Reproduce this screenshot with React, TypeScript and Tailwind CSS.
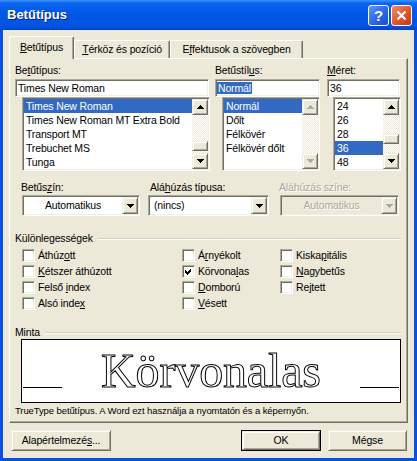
import React from 'react';

const FONT = "font-['Liberation_Sans',Arial,sans-serif]";

// classic 3D borders (XP beige palette)
const sunken =
  'border border-t-[#aca899] border-l-[#aca899] border-r-white border-b-white shadow-[inset_1px_1px_0_#716f64,inset_-1px_-1px_0_#f1efe2] p-px';
const raised =
  'border border-t-[#f1efe2] border-l-[#f1efe2] border-r-[#716f64] border-b-[#716f64] shadow-[inset_1px_1px_0_#fff,inset_-1px_-1px_0_#aca899] bg-[#ece9d8]';
const track =
  'bg-[image:repeating-conic-gradient(#ffffff_0_25%,#ece9d8_0_50%)] bg-[length:2px_2px]';

// "Be&tűtípus" -> underline the char after &
function Acc({ text }: { text: string }) {
  const i = text.indexOf('&');
  if (i < 0) return <>{text}</>;
  return (
    <>
      {text.slice(0, i)}
      <span className="underline underline-offset-[1px]">{text[i + 1]}</span>
      {text.slice(i + 2)}
    </>
  );
}

function Arrow({ dir, disabled }: { dir: 'up' | 'down'; disabled?: boolean }) {
  return (
    <svg width="7" height="4" viewBox="0 0 7 4" shapeRendering="crispEdges">
      <path d={dir === 'up' ? 'M3.5 0 L7 4 L0 4 Z' : 'M0 0 L7 0 L3.5 4 Z'} fill={disabled ? '#aca899' : '#000'} />
    </svg>
  );
}

function ScrollBtn({ dir, disabled }: { dir: 'up' | 'down'; disabled?: boolean }) {
  return (
    <div className={`${raised} w-[16px] h-[16px] shrink-0 flex items-center justify-center`}>
      <Arrow dir={dir} disabled={disabled} />
    </div>
  );
}

function ScrollBar({ before, disabled }: { before?: number; disabled?: boolean }) {
  return (
    <div className={`w-[16px] h-full flex flex-col ${track}`}>
      <ScrollBtn dir="up" disabled={disabled} />
      <div className="flex-1 flex flex-col">
        {before !== undefined && (
          <>
            <div style={{ height: before }} />
            <div className={`${raised} h-[10px]`} />
          </>
        )}
      </div>
      <ScrollBtn dir="down" disabled={disabled} />
    </div>
  );
}

function ListBox({
  items,
  selected,
  className,
  thumb,
  disabled,
}: {
  items: string[];
  selected: number;
  className: string;
  thumb?: number;
  disabled?: boolean;
}) {
  return (
    <div className={`${sunken} ${className} h-[74px] bg-white flex`}>
      <div className="flex-1 overflow-hidden">
        {items.map((it, i) => (
          <div
            key={it}
            className={`h-[14px] leading-[14px] pl-[2px] whitespace-nowrap ${i === selected ? 'bg-[#316ac5] text-white' : ''}`}
          >
            {it}
          </div>
        ))}
      </div>
      <ScrollBar before={thumb} disabled={disabled} />
    </div>
  );
}

function Combo({ text, center, disabled, className }: { text: string; center?: boolean; disabled?: boolean; className: string }) {
  return (
    <div className={`${sunken} ${className} h-[21px] flex ${disabled ? 'bg-[#ece9d8]' : 'bg-white'}`}>
      <div
        className={`flex-1 leading-[17px] ${center ? 'text-center' : 'pl-[4px]'} ${disabled ? 'text-[#aca899] [text-shadow:1px_1px_0_#fff]' : ''}`}
      >
        {text}
      </div>
      <div className={`${raised} w-[16px] h-[17px] flex items-center justify-center`}>
        <Arrow dir="down" disabled={disabled} />
      </div>
    </div>
  );
}

function Check({ label, checked }: { label: string; checked?: boolean }) {
  return (
    <div className="h-[16px] flex items-center">
      <div className="w-[13px] h-[13px] bg-white border border-t-[#aca899] border-l-[#aca899] border-r-white border-b-white shadow-[inset_1px_1px_0_#716f64,inset_-1px_-1px_0_#f1efe2] flex items-center justify-center">
        {checked && (
          <svg width="7" height="7" viewBox="0 0 7 7" shapeRendering="crispEdges">
            <path d="M0 2 L2 4 L6 0 L6 3 L2 7 L0 5 Z" fill="#000" />
          </svg>
        )}
      </div>
      <span className="ml-[3px] leading-[13px]">
        <Acc text={label} />
      </span>
    </div>
  );
}

function GroupTitle({ text }: { text: string }) {
  return (
    <div className="h-[13px] flex items-center">
      <span className="leading-[13px]">{text}</span>
      <div className="flex-1 ml-[5px] h-[2px] border-t border-t-[#d0d0bf] border-b border-b-white" />
    </div>
  );
}

function TitleBar() {
  return (
    <div className="h-[30px] shrink-0 flex items-center pl-[7px] pr-[5px] bg-[linear-gradient(to_bottom,#3d95ff_0%,#0a66f0_10%,#0058e6_45%,#0054e3_85%,#0043c8_100%)]">
      <span className="flex-1 text-[13px] tracking-normal font-bold text-white [text-shadow:1px_1px_0_#0a1e8a]">Betűtípus</span>
      <div className="w-[21px] h-[21px] rounded-[3px] border border-white bg-[linear-gradient(135deg,#5b95ff_0%,#2663e8_60%,#1b4fcf_100%)] flex items-center justify-center text-white font-bold text-[15px] leading-none">
        ?
      </div>
      <div className="w-[21px] h-[21px] ml-[2px] rounded-[3px] border border-white bg-[linear-gradient(135deg,#f08c6c_0%,#e0542c_55%,#c53a14_100%)] flex items-center justify-center">
        <svg width="11" height="11" viewBox="0 0 11 11">
          <path d="M1.5 1.5 L9.5 9.5 M9.5 1.5 L1.5 9.5" stroke="#fff" strokeWidth="2.2" />
        </svg>
      </div>
    </div>
  );
}

function Tabs() {
  const tab = 'border-t border-l border-t-white border-l-white border-r border-r-[#716f64] shadow-[inset_-1px_0_0_#aca899] rounded-t-[2px] bg-[#ece9d8] flex justify-center';
  return (
    <div className="h-[23px] flex items-end relative z-10 -mb-px">
      <div className={`${tab} w-[65px] h-[23px] pt-[4px] leading-[13px]`}>
        <Acc text="&Betűtípus" />
      </div>
      <div className={`${tab} w-[96px] h-[18px] mb-px pt-[2px] leading-[13px]`}>
        <Acc text="&Térköz és pozíció" />
      </div>
      <div className={`${tab} w-[133px] h-[18px] mb-px pt-[2px] leading-[13px]`}>
        <Acc text="E&ffektusok a szövegben" />
      </div>
    </div>
  );
}

function Panel() {
  return (
    <div className="h-[365px] shrink-0 border border-t-white border-l-white border-r-[#716f64] border-b-[#716f64] shadow-[inset_-1px_-1px_0_#aca899] pl-[5px] pr-[6px] flex flex-col">
      {/* font / style / size */}
      <div className="mt-[5px] flex">
        <div className="w-[195px] flex flex-col">
          <div className="h-[13px] leading-[13px]"><Acc text="Be&tűtípus:" /></div>
          <div className={`${sunken} mt-[2px] w-[194px] h-[18px] bg-white leading-[14px] pl-[2px]`}>Times New Roman</div>
          <ListBox
            className="ml-[7px] w-[188px]"
            items={['Times New Roman', 'Times New Roman MT Extra Bold', 'Transport MT', 'Trebuchet MS', 'Tunga']}
            selected={0}
            thumb={26}
          />
        </div>
        <div className="ml-[5px] w-[105px] flex flex-col">
          <div className="h-[13px] leading-[13px]"><Acc text="Betűstíl&us:" /></div>
          <div className={`${sunken} mt-[2px] h-[18px] bg-white leading-[14px] pl-[1px]`}>
            <span className="bg-[#316ac5] text-white px-px">Normál</span>
          </div>
          <ListBox
            className="ml-[7px] w-[98px]"
            items={['Normál', 'Dőlt', 'Félkövér', 'Félkövér dőlt']}
            selected={0}
            disabled
          />
        </div>
        <div className="ml-[7px] w-[74px] flex flex-col">
          <div className="h-[13px] leading-[13px]"><Acc text="&Méret:" /></div>
          <div className={`${sunken} mt-[2px] w-[73px] h-[18px] bg-white leading-[14px] pl-[2px]`}>36</div>
          <ListBox className="ml-[6px] w-[68px]" items={['24', '26', '28', '36', '48']} selected={3} thumb={19} />
        </div>
      </div>

      {/* colour / underline */}
      <div className="mt-[10px] ml-[6px] flex">
        <div className="w-[119px] flex flex-col">
          <div className="h-[13px] leading-[13px]"><Acc text="Betűs&zín:" /></div>
          <Combo className="mt-px ml-px w-[118px]" text="Automatikus" center />
        </div>
        <div className="ml-[8px] w-[121px] flex flex-col">
          <div className="h-[13px] leading-[13px] pl-[2px]"><Acc text="Alá&húzás típusa:" /></div>
          <Combo className="mt-px w-[121px]" text="(nincs)" />
        </div>
        <div className="ml-[10px] w-[120px] flex flex-col">
          <div className="h-[13px] leading-[13px] text-[#aca899] [text-shadow:1px_1px_0_#fff]">Aláhúzás színe:</div>
          <Combo className="mt-px ml-px w-[119px]" text="Automatikus" center disabled />
        </div>
      </div>

      {/* effects */}
      <div className="mt-[16px]">
        <GroupTitle text="Különlegességek" />
      </div>
      <div className="mt-[2px] ml-[7px] grid grid-cols-[160px_98px_1fr]">
        <div className="flex flex-col">
          <Check label="Áthúz&ott" />
          <Check label="&Kétszer áthúzott" />
          <Check label="Felső &index" />
          <Check label="Alsó inde&x" />
        </div>
        <div className="flex flex-col">
          <Check label="Á&rnyékolt" />
          <Check label="Körvona&las" checked />
          <Check label="&Domború" />
          <Check label="&Vésett" />
        </div>
        <div className="flex flex-col">
          <Check label="Kiska&pitális" />
          <Check label="&Nagybetűs" />
          <Check label="Re&jtett" />
        </div>
      </div>

      {/* preview */}
      <div className="mt-[15px]">
        <GroupTitle text="Minta" />
      </div>
      <div className="ml-[6px] h-[64px] bg-white border border-black flex items-end">
        <div className="ml-px w-[39px] h-px bg-black mb-[14px] shrink-0" />
        <svg className="flex-1 h-[62px] opacity-[0.99] [will-change:transform]">
          <text
            x="50%"
            y="47"
            textAnchor="middle"
            fontFamily="'Liberation Serif','Times New Roman',serif"
            fontSize="48"
            fill="#fff"
            stroke="#000"
            strokeWidth="1"
          >
            Körvonalas
          </text>
        </svg>
        <div className="mr-px w-[39px] h-px bg-black mb-[14px] shrink-0" />
      </div>
      <div className="mt-[2px] h-[12px] leading-[12px] text-[9.5px] tracking-[-0.1px]">
        TrueType betűtípus. A Word ezt használja a nyomtatón és a képernyőn.
      </div>
    </div>
  );
}

function Buttons() {
  const btn = `${raised} h-[21px] flex items-center justify-center`;
  return (
    <div className="mt-[7px] flex">
      <div className={`${btn} ml-[2px] w-[100px]`}>
        <Acc text="Alapértelmezé&s..." />
      </div>
      <div className="flex-1" />
      <div className="w-[80px] h-[21px] border border-black">
        <div className={`${raised} h-full flex items-center justify-center`}>OK</div>
      </div>
      <div className={`${btn} ml-[7px] mr-px w-[79px]`}>Mégse</div>
    </div>
  );
}

export default function App() {
  return (
    <div className={`${FONT} w-[417px] h-[461px] flex flex-col bg-[#0a50e0] text-[10.5px] tracking-[-0.15px] text-black select-none`}>
      <TitleBar />
      <div className="flex-1 mx-[3px] mb-[3px] bg-[#ece9d8] flex flex-col pt-[6px] px-[6px]">
        <Tabs />
        <Panel />
        <Buttons />
      </div>
    </div>
  );
}
